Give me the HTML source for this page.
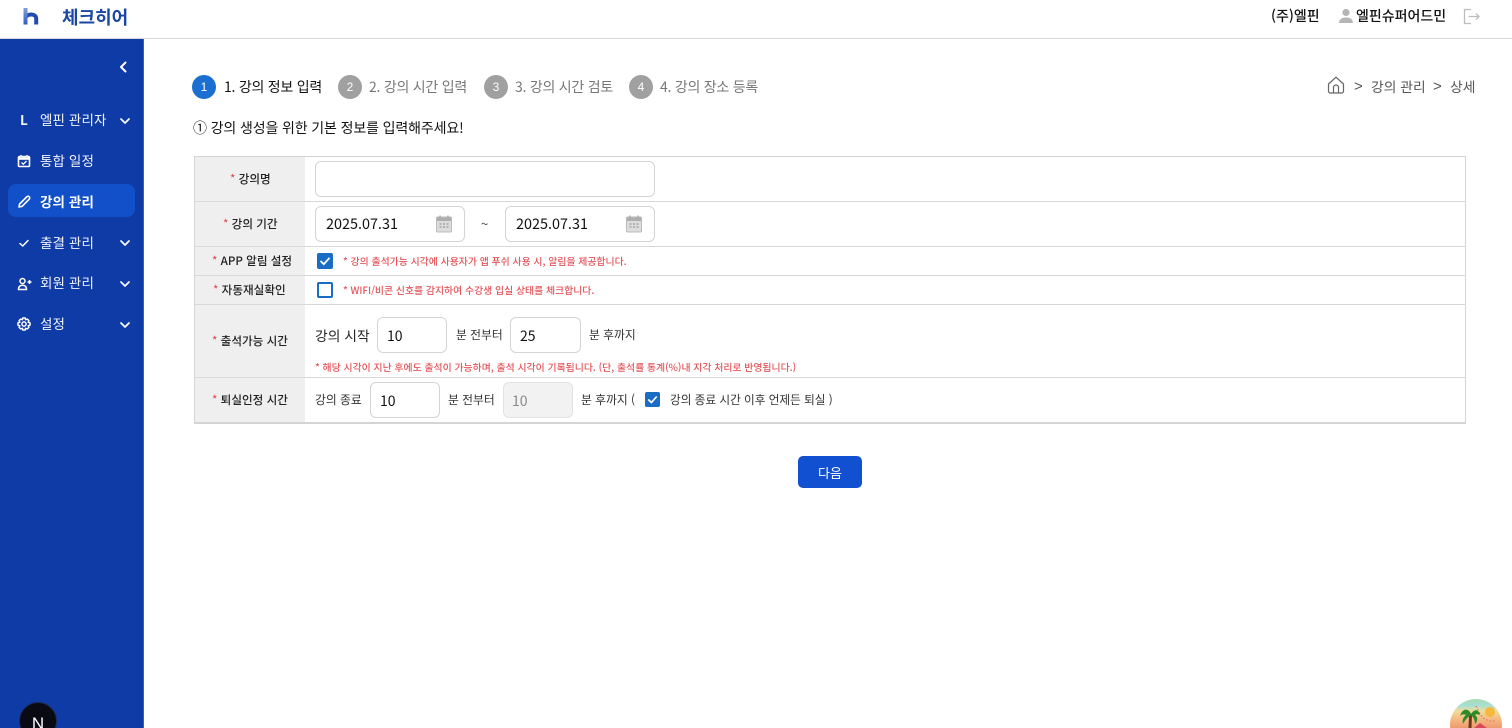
<!DOCTYPE html>
<html lang="ko">
<head>
<meta charset="utf-8">
<title>체크히어</title>
<style>
html,body{margin:0;padding:0;width:1512px;height:728px;overflow:hidden;background:#fff;}
body{font-family:"Noto Sans CJK KR","Liberation Sans",sans-serif;color:#111;position:relative;}
.a{position:absolute;white-space:nowrap;line-height:20px;}
.box{position:absolute;box-sizing:border-box;background:#fff;border:1px solid #d4d4d4;border-radius:6px;}
.t{color:#222;font-size:11.6px;font-weight:500;}
.s{color:#e5484d;font-weight:400;}
.m{color:#f2f4fb;font-size:13.500px;font-weight:400;letter-spacing:.1px;}
.hl{position:absolute;left:195px;width:1271px;height:1px;background:#d8d8d8;}
.g{position:absolute;left:195px;width:110px;background:#efefef;}
.red{color:#e4555a;font-size:9.900px;font-weight:500;}
.b13{font-size:11.800px;color:#333;}
.v{font-size:14.400px;color:#111;}
.step{position:absolute;top:75px;width:24px;height:24px;border-radius:50%;background:#a0a0a0;color:#fff;font:12px/24px "Liberation Sans",sans-serif;text-align:center;}
.st{font-size:14px;color:#777;letter-spacing:-.25px;}
svg{position:absolute;display:block;}
</style>
</head>
<body>
<!-- header -->
<div class="a" style="left:0;top:38px;width:1512px;height:1px;background:#d8d8d8;"></div>
<svg style="left:22px;top:7px" width="18" height="19" viewBox="0 0 18 19"><defs><linearGradient id="lg" x1="0" y1="0" x2="0" y2="1"><stop offset="0" stop-color="#7fa0e0"/><stop offset="1" stop-color="#2f5cc0"/></linearGradient></defs><path d="M3.500 11C5 6.500 14 6 14.200 11.500V17.500" stroke="#1f4cae" stroke-width="4" fill="none"/><rect x="1.500" y="1" width="4" height="16.500" fill="url(#lg)"/></svg>
<div class="a" style="left:62px;top:6px;font-size:18px;font-weight:700;color:#1a47a5;line-height:22px;">체크히어</div>
<div class="a" style="left:1271px;top:6px;font-size:14px;font-weight:500;color:#111;">(주)엘핀</div>
<svg style="left:1338px;top:8px" width="16" height="16" viewBox="0 0 16 16"><circle cx="8" cy="4.500" r="3.600" fill="#b5b5b5"/><path d="M1 15C1 11 4.500 9.500 8 9.500S15 11 15 15Z" fill="#b5b5b5"/></svg>
<div class="a" style="left:1356px;top:6px;font-size:14px;font-weight:500;color:#111;">엘핀슈퍼어드민</div>
<svg style="left:1463px;top:8px" width="18" height="18" viewBox="0 0 18 18" fill="none" stroke="#bdbdbd" stroke-width="1.300"><path d="M8 1.500H1.500V15.500H8"/><path d="M5.500 8.500H16M13 5.500L16 8.500L13 11.500"/></svg>

<!-- sidebar -->
<div class="a" style="left:0;top:39px;width:143px;height:689px;background:#0f3ba6;border-right:1px solid #2f63d0;"></div>
<svg style="left:116px;top:60px" width="14" height="14" viewBox="0 0 14 14" fill="none" stroke="#fff" stroke-width="2" stroke-linecap="round" stroke-linejoin="round"><path d="M9.500 2.500L5 7L9.500 11.500"/></svg>
<div class="a" style="left:8px;top:184px;width:127px;height:33px;background:#1150c8;border-radius:8px;"></div>
<div class="a m" style="left:20px;top:109px;font-weight:700;">L</div>
<div class="a m" style="left:40px;top:109px;">엘핀 관리자</div>
<div class="a m" style="left:40px;top:150px;">통합 일정</div>
<div class="a m" style="left:40px;top:191px;font-weight:700;color:#fff;">강의 관리</div>
<div class="a m" style="left:40px;top:232px;">출결 관리</div>
<div class="a m" style="left:40px;top:272px;">회원 관리</div>
<div class="a m" style="left:40px;top:313px;">설정</div>
<svg style="left:118px;top:114px" width="14" height="14" viewBox="0 0 14 14" fill="none" stroke="#fff" stroke-width="1.700" stroke-linecap="round" stroke-linejoin="round"><path d="M3 5L7 9L11 5"/></svg>
<svg style="left:118px;top:236px" width="14" height="14" viewBox="0 0 14 14" fill="none" stroke="#fff" stroke-width="1.700" stroke-linecap="round" stroke-linejoin="round"><path d="M3 5L7 9L11 5"/></svg>
<svg style="left:118px;top:277px" width="14" height="14" viewBox="0 0 14 14" fill="none" stroke="#fff" stroke-width="1.700" stroke-linecap="round" stroke-linejoin="round"><path d="M3 5L7 9L11 5"/></svg>
<svg style="left:118px;top:318px" width="14" height="14" viewBox="0 0 14 14" fill="none" stroke="#fff" stroke-width="1.700" stroke-linecap="round" stroke-linejoin="round"><path d="M3 5L7 9L11 5"/></svg>
<svg style="left:17px;top:154px" width="14" height="14" viewBox="0 0 14 14" fill="none" stroke="#fff"><rect x="1.500" y="2.500" width="11" height="10" rx="1" stroke-width="1.600"/><path d="M1.500 4.500H12.500" stroke-width="2.600"/><path d="M4 1V3M10 1V3" stroke-width="1.300"/><path d="M4.500 8.500L6.300 10.200L9.500 7" stroke-width="1.300"/></svg>
<svg style="left:17px;top:195px" width="14" height="14" viewBox="0 0 14 14" fill="none" stroke="#fff" stroke-width="1.600" stroke-linejoin="round"><path d="M2 12L2.600 9L9.800 1.800A1 1 0 0 1 12.200 4.200L5 11.400Z"/></svg>
<svg style="left:17px;top:236px" width="14" height="14" viewBox="0 0 14 14" fill="none" stroke="#fff" stroke-width="1.500" stroke-linecap="round" stroke-linejoin="round"><path d="M3 7.500L5.700 10L11 4.500"/></svg>
<svg style="left:17px;top:277px" width="15" height="14" viewBox="0 0 15 14" fill="none" stroke="#fff" stroke-width="1.500"><circle cx="5.500" cy="4" r="2.500"/><path d="M1.500 12.500C1.500 9 3.500 8.200 5.500 8.200S9.500 9 9.500 12.500Z"/><path d="M10.500 5H14.500M12.500 3V7"/></svg>
<svg style="left:17px;top:317px" width="14" height="14" viewBox="0 0 14 14" fill="none" stroke="#fff"><circle cx="7" cy="7" r="2.100" stroke-width="1.500"/><path d="M5.800 1H8.200L8.600 2.700L10.200 2L11.900 3.700L11.200 5.300L13 5.800V8.200L11.200 8.700L11.900 10.300L10.200 12L8.600 11.300L8.200 13H5.800L5.400 11.300L3.800 12L2.100 10.300L2.800 8.700L1 8.200V5.800L2.800 5.300L2.100 3.700L3.800 2L5.400 2.700Z" stroke-width="1.500" stroke-linejoin="round"/></svg>
<div class="a" style="left:19px;top:702px;width:38px;height:38px;border-radius:50%;background:#0a0a14;border:1px solid #1d2a55;box-sizing:border-box;color:#fff;font:400 17px/42px 'Liberation Sans',sans-serif;text-align:center;">N</div>

<!-- steps -->
<div class="step" style="left:192px;background:#1a6fd0;">1</div>
<div class="a st" style="left:224px;top:77px;color:#111;">1. 강의 정보 입력</div>
<div class="step" style="left:338px;">2</div>
<div class="a st" style="left:369px;top:77px;">2. 강의 시간 입력</div>
<div class="step" style="left:484px;">3</div>
<div class="a st" style="left:515px;top:77px;">3. 강의 시간 검토</div>
<div class="step" style="left:629px;">4</div>
<div class="a st" style="left:660px;top:77px;">4. 강의 장소 등록</div>

<!-- breadcrumb -->
<svg style="left:1327px;top:76px" width="18" height="18" viewBox="0 0 18 18" fill="none" stroke="#666" stroke-width="1.200" stroke-linejoin="round"><path d="M1.500 8L9 1.200L16.500 8V15A2 2 0 0 1 14.500 17H3.500A2 2 0 0 1 1.500 15Z"/><path d="M6.500 17V11.500A2.500 2.500 0 0 1 11.500 11.500V17"/></svg>
<div class="a" style="left:1354px;top:77px;font:15px/20px 'Liberation Sans',sans-serif;color:#555;">&gt;</div>
<div class="a" style="left:1371px;top:76px;font-size:13.800px;color:#555;">강의 관리</div>
<div class="a" style="left:1433px;top:77px;font:15px/20px 'Liberation Sans',sans-serif;color:#555;">&gt;</div>
<div class="a" style="left:1450px;top:76px;font-size:13.800px;color:#555;">상세</div>

<div class="a" style="left:193px;top:118px;font-size:14px;color:#111;letter-spacing:-.13px;">① 강의 생성을 위한 기본 정보를 입력해주세요!</div>

<!-- table -->
<div class="g" style="top:156px;height:267px;"></div>
<div class="a" style="left:194px;top:156px;width:1272px;height:268px;box-sizing:border-box;border:1px solid #d4d4d4;border-bottom:2px solid #d4d4d4;"></div>
<div class="hl" style="top:201px"></div>
<div class="hl" style="top:246px"></div>
<div class="hl" style="top:275px"></div>
<div class="hl" style="top:304px"></div>
<div class="hl" style="top:377px"></div>

<div class="a t" style="left:230px;top:169px;"><span class="s">*</span> 강의명</div>
<div class="a t" style="left:223px;top:214px;"><span class="s">*</span> 강의 기간</div>
<div class="a t" style="left:212px;top:251px;"><span class="s">*</span> APP 알림 설정</div>
<div class="a t" style="left:213px;top:280px;"><span class="s">*</span> 자동재실확인</div>
<div class="a t" style="left:212px;top:331px;"><span class="s">*</span> 출석가능 시간</div>
<div class="a t" style="left:212px;top:390px;"><span class="s">*</span> 퇴실인정 시간</div>

<div class="box" style="left:315px;top:161px;width:340px;height:36px;"></div>
<div class="box" style="left:315px;top:206px;width:150px;height:36px;"></div>
<div class="a v" style="left:326px;top:214px;">2025.07.31</div>
<svg style="left:436px;top:215px" width="16" height="18" viewBox="0 0 16 18"><rect x="0.500" y="2" width="15" height="15" rx="1" fill="#dcdcdc" stroke="#bbb"/><rect x="1" y="2.500" width="14" height="3.500" fill="#aeaeae"/><path d="M4 0.500V3.500M12 0.500V3.500" stroke="#a8a8a8" stroke-width="1.300"/><path d="M3.500 9H5.500M7 9H9M10.500 9H12.500M3.500 12H5.500M7 12H9M10.500 12H12.500" stroke="#999" stroke-width="1.200"/></svg>
<div class="a" style="left:481px;top:214px;font-size:13px;color:#444;">~</div>
<div class="box" style="left:505px;top:206px;width:150px;height:36px;"></div>
<div class="a v" style="left:516px;top:214px;">2025.07.31</div>
<svg style="left:626px;top:215px" width="16" height="18" viewBox="0 0 16 18"><rect x="0.500" y="2" width="15" height="15" rx="1" fill="#dcdcdc" stroke="#bbb"/><rect x="1" y="2.500" width="14" height="3.500" fill="#aeaeae"/><path d="M4 0.500V3.500M12 0.500V3.500" stroke="#a8a8a8" stroke-width="1.300"/><path d="M3.500 9H5.500M7 9H9M10.500 9H12.500M3.500 12H5.500M7 12H9M10.500 12H12.500" stroke="#999" stroke-width="1.200"/></svg>

<svg style="left:317px;top:253px" width="16" height="16" viewBox="0 0 16 16"><rect width="16" height="16" rx="2" fill="#1a6cc4"/><path d="M3.500 8L6.800 11.200L12.500 4.800" stroke="#fff" stroke-width="1.800" fill="none"/></svg>
<div class="a red" style="left:343px;top:251px;">* 강의 출석가능 시각에 사용자가 앱 푸쉬 사용 시, 알림을 제공합니다.</div>
<div class="a" style="left:317px;top:282px;width:16px;height:16px;box-sizing:border-box;border:2px solid #1a6cc4;border-radius:2px;background:#fff;"></div>
<div class="a red" style="left:343px;top:280px;">* WIFI/비콘 신호를 감지하여 수강생 입실 상태를 체크합니다.</div>

<div class="a" style="left:315px;top:325px;font-size:13.800px;color:#222;">강의 시작</div>
<div class="box" style="left:377px;top:317px;width:70px;height:36px;"></div>
<div class="a v" style="left:387px;top:326px;font-size:14px;">10</div>
<div class="a b13" style="left:456px;top:325px;">분 전부터</div>
<div class="box" style="left:510px;top:317px;width:71px;height:36px;"></div>
<div class="a v" style="left:520px;top:326px;font-size:14px;">25</div>
<div class="a b13" style="left:589px;top:325px;">분 후까지</div>
<div class="a red" style="left:315px;top:357px;">* 해당 시각이 지난 후에도 출석이 가능하며, 출석 시각이 기록됩니다. (단, 출석률 통계(%)내 지각 처리로 반영됩니다.)</div>

<div class="a b13" style="left:315px;top:390px;">강의 종료</div>
<div class="box" style="left:370px;top:382px;width:70px;height:36px;"></div>
<div class="a v" style="left:380px;top:391px;font-size:14px;">10</div>
<div class="a b13" style="left:448px;top:390px;">분 전부터</div>
<div class="box" style="left:503px;top:382px;width:70px;height:36px;background:#f2f2f2;border-color:#e2e2e2;"></div>
<div class="a v" style="left:512px;top:391px;font-size:14px;color:#888;">10</div>
<div class="a b13" style="left:581px;top:390px;">분 후까지 (</div>
<svg style="left:645px;top:392px" width="15" height="15" viewBox="0 0 16 16"><rect width="16" height="16" rx="2" fill="#1a6cc4"/><path d="M3.500 8L6.800 11.200L12.500 4.800" stroke="#fff" stroke-width="1.800" fill="none"/></svg>
<div class="a b13" style="left:670px;top:390px;font-size:11.650px;">강의 종료 시간 이후 언제든 퇴실 )</div>

<!-- button -->
<div class="a" style="left:798px;top:456px;width:64px;height:32px;background:#1150d0;border-radius:5px;color:#fff;font-size:13px;line-height:33px;text-align:center;">다음</div>

<!-- floating -->
<svg style="left:1450px;top:699px" width="52" height="29" viewBox="0 0 52 29">
<defs><clipPath id="c"><circle cx="26" cy="26" r="26"/></clipPath><linearGradient id="sky" x1="0" y1="0" x2="0" y2="1"><stop offset="0" stop-color="#a8dcae"/><stop offset=".22" stop-color="#a5dfd4"/><stop offset=".42" stop-color="#f3dc9a"/><stop offset=".7" stop-color="#f5b982"/><stop offset="1" stop-color="#ee9a70"/></linearGradient></defs>
<g clip-path="url(#c)"><rect width="52" height="29" fill="url(#sky)"/><circle cx="40" cy="13" r="5" fill="#f5b83a"/><path d="M26 7L29 13L33 19L39 22L45 22" stroke="#e0765a" stroke-width="1.200" stroke-dasharray="1.500 2" fill="none"/><path d="M20 29L20.500 16" stroke="#6b3a1e" stroke-width="3"/><path d="M21 15C18 8 12 10 10 17C12 15 14 15 16 16C13 18 12 22 13 25C15 21 18 18 21 16C24 19 25 22 25 25C28 22 28 18 25 16C26 15 28 15 30 16C29 11 25 9 21 15Z" fill="#2f8a2a"/><path d="M24 29L30 24L37 29Z" fill="#d84a5a"/></g>
</svg>
</body>
</html>
